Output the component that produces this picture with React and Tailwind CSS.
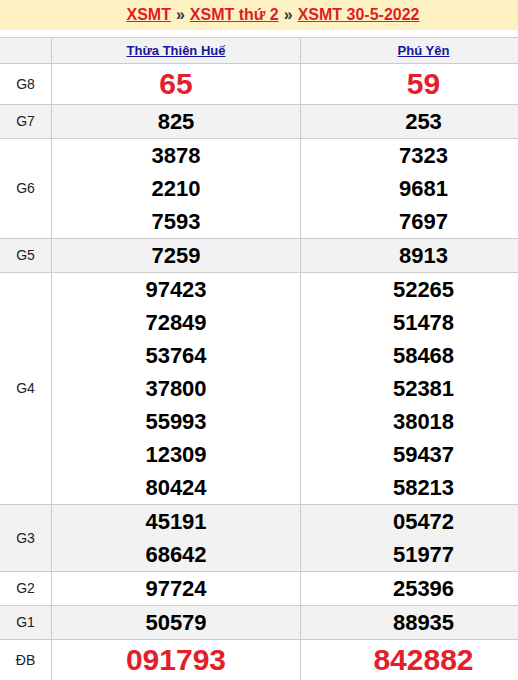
const rows = [
  { label: "G8", a: ["65"], b: ["59"], big: true },
  { label: "G7", a: ["825"], b: ["253"], gray: true },
  { label: "G6", a: ["3878", "2210", "7593"], b: ["7323", "9681", "7697"] },
  { label: "G5", a: ["7259"], b: ["8913"], gray: true },
  {
    label: "G4",
    a: ["97423", "72849", "53764", "37800", "55993", "12309", "80424"],
    b: ["52265", "51478", "58468", "52381", "38018", "59437", "58213"],
  },
  { label: "G3", a: ["45191", "68642"], b: ["05472", "51977"], gray: true },
  { label: "G2", a: ["97724"], b: ["25396"] },
  { label: "G1", a: ["50579"], b: ["88935"], gray: true },
  { label: "ĐB", a: ["091793"], b: ["842882"], big: true },
];

function Numbers({ list, big }) {
  if (big) {
    return (
      <div className="h-[40px] flex items-center justify-center text-[30px] font-bold text-[#e3202a] leading-none">
        {list[0]}
      </div>
    );
  }
  return (
    <div className="flex flex-col">
      {list.map((n) => (
        <div key={n} className="h-[33px] leading-[33px] text-center text-[22px] font-bold text-black">
          {n}
        </div>
      ))}
    </div>
  );
}

export default function App() {
  return (
    <div className="w-[518px] overflow-hidden bg-white font-['Liberation_Sans',Arial,sans-serif]">
      <div className="w-[546px]">
        <div className="h-[30px] bg-[#fef2c4] flex items-center justify-center text-[16px] font-bold">
          <a className="text-[#df1d24] underline">XSMT</a>
          <span className="text-[#333] mx-[5px]">»</span>
          <a className="text-[#df1d24] underline">XSMT thứ 2</a>
          <span className="text-[#333] mx-[5px]">»</span>
          <a className="text-[#df1d24] underline">XSMT 30-5-2022</a>
        </div>

        <div className="mt-[7px] border-t border-[#cccccc]">
          <div className="grid grid-cols-[52px_249px_245px] bg-[#f2f2f2] border-b border-[#cccccc] h-[26px]">
            <div className="border-r border-[#cccccc]"></div>
            <div className="border-r border-[#cccccc] flex items-center justify-center">
              <a className="text-[13px] font-bold text-[#16169c] underline">Thừa Thiên Huế</a>
            </div>
            <div className="flex items-center justify-center">
              <a className="text-[13px] font-bold text-[#16169c] underline">Phú Yên</a>
            </div>
          </div>

          {rows.map((r) => (
            <div
              key={r.label}
              className={`grid grid-cols-[52px_249px_245px] border-b border-[#cccccc] ${r.gray ? "bg-[#f2f2f2]" : "bg-white"}`}
            >
              <div className="border-r border-[#cccccc] flex items-center justify-center text-[14px] text-[#222]">
                {r.label}
              </div>
              <div className="border-r border-[#cccccc]">
                <Numbers list={r.a} big={r.big} />
              </div>
              <div>
                <Numbers list={r.b} big={r.big} />
              </div>
            </div>
          ))}
        </div>
      </div>
    </div>
  );
}
